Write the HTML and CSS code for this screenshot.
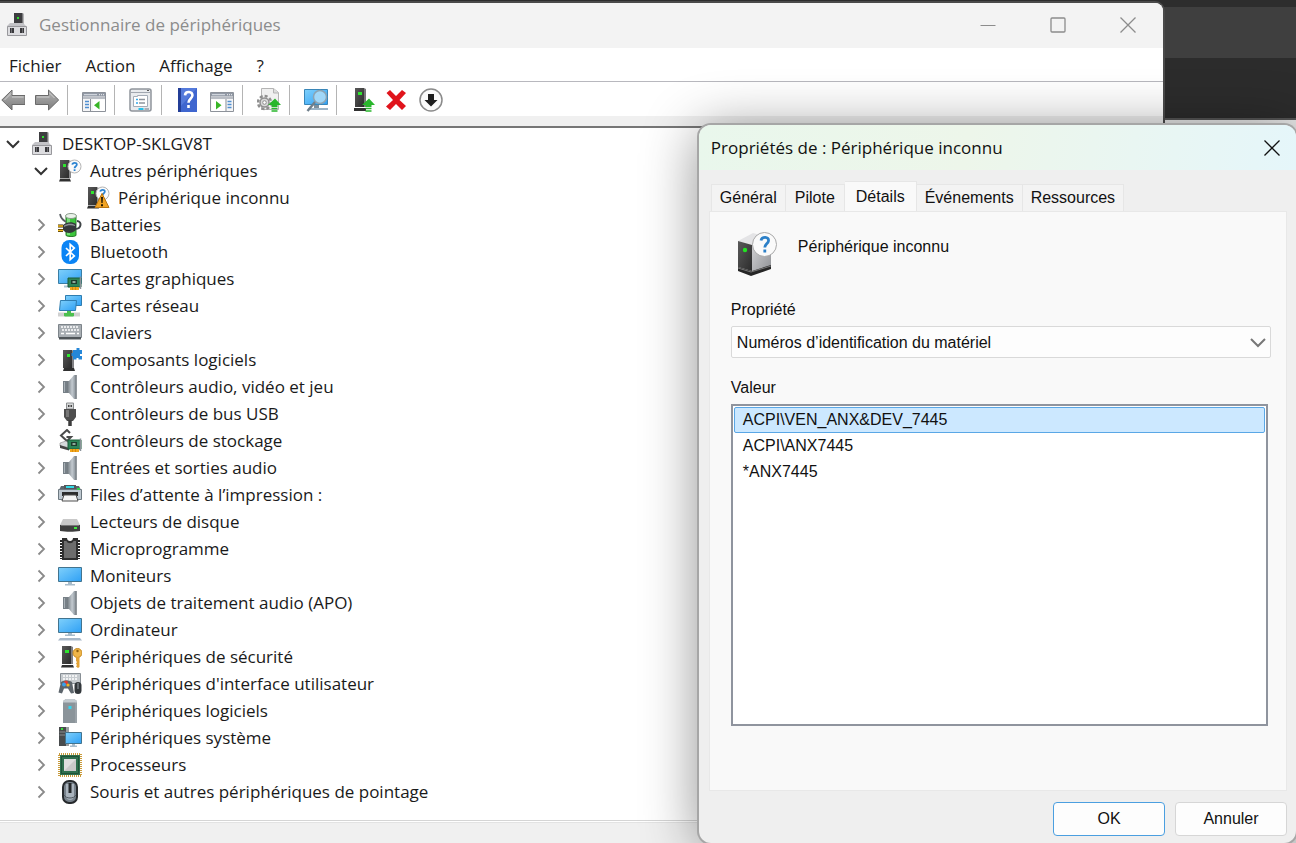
FILE: index.html
```html
<!DOCTYPE html>
<html lang="fr">
<head>
  <meta charset="UTF-8" />
  <title>Gestionnaire de périphériques</title>
  <link rel="stylesheet" href="styles.css">
</head>
<body>
  <!-- icon sprite -->
  <svg class="sprite" aria-hidden="true">
    <defs>
      <linearGradient id="gScreen" x1="0" y1="0" x2="1" y2="1">
        <stop offset="0" stop-color="#7fd0fb" /><stop offset="1" stop-color="#2fa0f5" />
      </linearGradient>
      <linearGradient id="gMetal" x1="0" y1="0" x2="1" y2="0">
        <stop offset="0" stop-color="#6d757b" /><stop offset=".6" stop-color="#c3cad0" /><stop offset="1" stop-color="#8d969d" />
      </linearGradient>
      <linearGradient id="gArrow" x1="0" y1="0" x2="0" y2="1">
        <stop offset="0" stop-color="#b5b5b5" /><stop offset="1" stop-color="#7c7c7c" />
      </linearGradient>
      <linearGradient id="gDark" x1="0" y1="0" x2="1" y2="1">
        <stop offset="0" stop-color="#5a5a5a" /><stop offset="1" stop-color="#2b2b2b" />
      </linearGradient>
      <linearGradient id="gSide" x1="0" y1="0" x2="1" y2="1">
        <stop offset="0" stop-color="#d6d6d8" /><stop offset="1" stop-color="#8f9195" />
      </linearGradient>
    </defs>

    <symbol id="i-computer-hub" viewBox="0 0 24 24">
      <path d="M9 0h8l1 1v11H9z" fill="#3d3d40" />
      <path d="M17 .5h1.500v11H17z" fill="#77777a" />
      <rect x="12" y="4" width="2" height="2" fill="#2ee02e" />
      <path d="M5 10h13l3 3v2H2v-2z" fill="#c3c3c7" />
      <path d="M2.500 13.500h19v9h-19z" fill="#dcdcdf" stroke="#98989c" />
      <rect x="5" y="15" width="4" height="5" fill="#3a3a3d" /><rect x="15" y="15" width="4" height="5" fill="#3a3a3d" />
      <rect x="6" y="15" width="1" height="5" fill="#6c6c70" /><rect x="17" y="15" width="1" height="5" fill="#6c6c70" />
    </symbol>
    <symbol id="i-tower" viewBox="0 0 24 24">
      <path d="M2 1h9v18H2z" fill="url(#gDark)" /><path d="M11 1l2 1v17h-2z" fill="#8b8b8d" />
      <rect x="5" y="5" width="3" height="3" fill="#2fe52f" />
      <path d="M2 20h10l1 2.500H1z" fill="#303030" /><path d="M2 19h10v1H2z" fill="#a9a9a9" />
    </symbol>
    <symbol id="i-unknown" viewBox="0 0 24 24">
      <use href="#i-tower" width="24" height="24" />
      <circle cx="16.500" cy="7.500" r="6.500" fill="#fafafa" stroke="#b4b4b4" />
      <path d="M14.300 5.700c.3-2.600 4.700-2.500 4.500 0c-.1 1.500-2.200 1.600-2.200 3.500M16.600 10.300v1.600" fill="none" stroke="#2c84d2" stroke-width="1.800" />
    </symbol>
    <symbol id="i-unknown-warn" viewBox="0 0 24 24">
      <use href="#i-unknown" width="24" height="24" />
      <path d="M16 7.500L23 21.500H9z" fill="#f0a323" stroke="#b87512" stroke-linejoin="round" />
      <path d="M15 11h2l-.4 6h-1.200zM15 18.200h2v2h-2z" fill="#241800" />
    </symbol>
    <symbol id="i-battery" viewBox="0 0 24 24">
      <path d="M8 3.500h10v19c-2 1.500-8 1.500-10 0z" fill="#3cc63c" stroke="#2b7a2b" />
      <path d="M9 4h3v18H9z" fill="#8fe88f" opacity=".7" />
      <ellipse cx="13" cy="3" rx="5.500" ry="2.500" fill="#eaf3ea" stroke="#8a9a8a" />
      <path d="M2 1c1 5 3 6 6 8" fill="none" stroke="#5b6064" stroke-width="1.800" />
      <path d="M17 16c7 0 7-8 2-8" fill="none" stroke="#3f4447" stroke-width="2" />
      <path d="M5 12c3-3 9-4 13-1v6c-4 4-10 4-13 0z" fill="#34383b" /><path d="M6 12.500c3-2 8-2.500 11-.5v1c-3-1-8-1-11 1z" fill="#8b9195" />
      <path d="M0 13h5M0 17.500h5" stroke="#3b2a00" stroke-width="3" /><path d="M0 13h5M0 17.500h5" stroke="#f5bd22" stroke-width="1.600" />
    </symbol>
    <symbol id="i-bluetooth" viewBox="0 0 24 24">
      <rect x="3.500" y="0" width="17.500" height="24" rx="8" fill="#0a84f5" />
      <path d="M8 8l8.300 8-4.100 3.700V4.300l4.100 3.700L8 16" fill="none" stroke="#fff" stroke-width="1.700" />
    </symbol>
    <symbol id="i-card" viewBox="0 0 24 24">
      <path d="M10 11h13v9H10z" fill="#2d8558" stroke="#1a5c39" />
      <path d="M22.500 9.500V22" stroke="#8b9399" stroke-width="1.500" />
      <rect x="13" y="13" width="6" height="4" fill="#1d3d2d" /><rect x="14.500" y="14" width="3" height="2" fill="#8ea99a" />
      <path d="M12 20h9v3h-9z" fill="#f3a61c" /><path d="M14.500 20v3M17.500 20v3" stroke="#c57b00" stroke-width=".6" />
    </symbol>
    <symbol id="i-display-card" viewBox="0 0 24 24">
      <path d="M.5 2.500h23v14H.5z" fill="url(#gScreen)" stroke="#3a7ea5" />
      <path d="M6 18.500h6v2H6z" fill="#a9c3d2" />
      <use href="#i-card" width="24" height="24" />
    </symbol>
    <symbol id="i-network" viewBox="0 0 24 24">
      <path d="M7.500 1.500h16v10h-16z" fill="url(#gScreen)" stroke="#2f7db0" />
      <path d="M2.500 6.500h16l-1 10h-16z" fill="url(#gScreen)" stroke="#2f7db0" />
      <path d="M0 20.500h22" stroke="#d0d0d0" stroke-width="4" /><path d="M9 17h4v2.500h2.500v3h-9v-3H9z" fill="#4cc04f" /><path d="M6 20.500h10" stroke="#4cc04f" stroke-width="3" />
    </symbol>
    <symbol id="i-keyboard" viewBox="0 0 24 24">
      <path d="M.5 3.500h23v13H.5z" fill="#a9afb4" stroke="#7d848a" />
      <path d="M1 16h22v2.500H1z" fill="#4f5559" />
      <path d="M3 6h18M4 9h17" stroke="#fff" stroke-width="1.500" stroke-dasharray="2 1" /><path d="M3 12.500h3M8 12.500h9M19 12.500h2" stroke="#fff" stroke-width="1.500" />
    </symbol>
    <symbol id="i-software-component" viewBox="0 0 24 24">
      <path d="M5 2h9v18H5z" fill="url(#gDark)" /><path d="M14 2l2 1v17h-2z" fill="#808083" />
      <rect x="9" y="6" width="3" height="3" fill="#2fe52f" />
      <path d="M6 20h10l1 3H5z" fill="#303030" />
      <path d="M15 2h3.500V0h3v2H24v4h-2v2h2v3.500h-3.500V10h-2v1.500H15V8h-1.500V5H15z" fill="#2587d9" />
    </symbol>
    <symbol id="i-speaker" viewBox="0 0 24 24">
      <path d="M5 6h6v12H5z" fill="#778087" /><path d="M6.500 7v10" stroke="#a9b1b7" />
      <path d="M9 7l2-1 5-6h1.500v24H16l-5-6-2-1z" fill="url(#gMetal)" />
      <path d="M18 0v24" stroke="#6d757b" stroke-width="1.500" />
    </symbol>
    <symbol id="i-usb" viewBox="0 0 24 24">
      <path d="M8.500 1h7v6h-7z" fill="#d6d8d9" stroke="#8c8f91" /><path d="M10 3h1.500v2H10zM12.500 3H14v2h-1.500z" fill="#444" />
      <path d="M6 7h12v8l-3 4H9l-3-4z" fill="#4e4e4e" /><path d="M8 8h3v7H8z" fill="#777" />
      <path d="M12 18v6" stroke="#3c3c3c" stroke-width="3.500" />
    </symbol>
    <symbol id="i-storage" viewBox="0 0 24 24">
      <path d="M12 4L9 1 3 6.500l6 5.500 4-4H8.500" fill="none" stroke="#4a4a4a" stroke-width="2" />
      <path d="M2 14l6-2 5 4v3L2 17z" fill="#d5d9db" stroke="#888" stroke-width=".6" /><path d="M2 16l9 3v2.500L2 19z" fill="#444" />
      <use href="#i-card" width="24" height="24" />
    </symbol>
    <symbol id="i-printer" viewBox="0 0 24 24">
      <path d="M3 3h18l2 4H1z" fill="#5d666d" /><path d="M6 2h12v4H6z" fill="#53575a" /><path d="M8 3h8v2H8z" fill="#32d9e6" />
      <path d="M.5 6.500h23v10H.5z" fill="#bec8d0" stroke="#6d7880" /><rect x="19" y="5" width="3" height="2" fill="#32d24a" />
      <path d="M4 9h16v4H4z" fill="#2c2c2c" /><path d="M6 12h12l2 6H4z" fill="#f5f5f5" stroke="#4f4f4f" />
    </symbol>
    <symbol id="i-disk" viewBox="0 0 24 24">
      <path d="M5 9h14l3 6H2z" fill="#c9c9c9" /><path d="M2 15h20v6c-6 1-14 1-20 0z" fill="#3f3f3f" /><path d="M3 15.500h18" stroke="#777" />
      <rect x="16" y="17" width="3" height="2" fill="#3ee63e" />
    </symbol>
    <symbol id="i-firmware" viewBox="0 0 24 24">
      <path d="M3 3v19M21 3v19" stroke="#282828" stroke-width="2" stroke-dasharray="2 1" />
      <path d="M4 1h5c0 4 6 4 6 0h5v22H4z" fill="#303030" /><path d="M6 4h2.500c1 3 6 3 7 0H18v17H6z" fill="#6d6d6d" />
    </symbol>
    <symbol id="i-monitor" viewBox="0 0 24 24">
      <path d="M.5 3.500h23v14H.5z" fill="url(#gScreen)" stroke="#42748f" />
      <path d="M10 18h4v2h3v1.500H7V20h3z" fill="#a8bccb" />
    </symbol>
    <symbol id="i-pc" viewBox="0 0 24 24">
      <path d="M.5.500h23v14H.5z" fill="url(#gScreen)" stroke="#42748f" />
      <path d="M10 15h4v1.500h3V18H7v-1.500h3z" fill="#a8bccb" /><path d="M2 20h20l2 2.500H0z" fill="#a9b9c9" />
    </symbol>
    <symbol id="i-security" viewBox="0 0 24 24">
      <path d="M4 1h9v18H4z" fill="url(#gDark)" /><path d="M13 1l2 1v17h-2z" fill="#808083" />
      <rect x="7" y="5" width="4" height="3" fill="#2fe52f" /><path d="M4 20h11l1 2.500H3z" fill="#303030" />
      <circle cx="19.500" cy="8" r="4.500" fill="#efb548" stroke="#c68a20" /><circle cx="19.500" cy="6" r="1.200" fill="#8a5c0c" />
      <path d="M18 12h3.500v10l-1.500 1-2-1.500 1-1.500-1-1.500 1-1.500-1-1z" fill="#e3a234" />
    </symbol>
    <symbol id="i-hid" viewBox="0 0 24 24">
      <path d="M2.500 1.500h20v10h-20z" fill="#c6cbcf" stroke="#878e94" />
      <path d="M5 4h15M5 7h15" stroke="#fff" stroke-width="1.500" stroke-dasharray="2 1" />
      <path d="M3 10c3-2 8-2 11 0l2 11-3 .5-3-5H6L4 21.500l-3.500-1z" fill="#5d656c" />
      <circle cx="8" cy="10.500" r="2" fill="#e03a2f" /><circle cx="10" cy="13" r="1.600" fill="#f0b323" /><circle cx="6" cy="12.500" r="2" fill="#3aa0ea" />
      <rect x="16.500" y="10" width="7" height="12" rx="3.500" fill="#32373b" /><path d="M20 11v6" stroke="#9aa4ab" />
    </symbol>
    <symbol id="i-software-device" viewBox="0 0 24 24">
      <path d="M5 2l3-2h8l3 2v22H5z" fill="#9aa2a8" /><path d="M5 3h12v21H5z" fill="#8b949a" /><path d="M5 2l3-2h8l3 2v1.500H5z" fill="#c3cacf" />
      <rect x="10.500" y="7" width="3" height="3" fill="#35d5ee" />
    </symbol>
    <symbol id="i-system" viewBox="0 0 24 24">
      <path d="M1 1h7v19H1z" fill="#484b4d" /><path d="M8 1h3v19H8z" fill="#9b9fa2" /><rect x="3" y="2" width="2" height="2" fill="#38e038" />
      <path d="M1.500 6h6M1.500 9h6" stroke="#8a8d90" />
      <path d="M7.500 6.500h16v11h-16z" fill="url(#gScreen)" stroke="#42748f" /><path d="M14 18h3v1.500h2V21h-7v-1.500h2z" fill="#a8bccb" />
    </symbol>
    <symbol id="i-cpu" viewBox="0 0 24 24">
      <rect x="1" y="1" width="22" height="22" fill="none" stroke="#c99b3b" stroke-width="2" stroke-dasharray="1 1" />
      <path d="M2 2h20v20H2z" fill="#2f6f4e" /><path d="M3.500 3.500h17v17h-17z" fill="none" stroke="#1f5338" />
      <path d="M6 6h12v12H6z" fill="#dedede" /><path d="M18 6v12H6z" fill="#c9c9c9" />
    </symbol>
    <symbol id="i-mouse" viewBox="0 0 24 24">
      <rect x="5" y="1" width="14" height="22" rx="6" fill="#76808a" stroke="#26292c" stroke-width="2" />
      <path d="M8 4v13c1 4 7 4 8 0V4z" fill="#a9b3bd" /><path d="M6 15c2 4 10 4 12 0" fill="none" stroke="#4d555d" />
      <path d="M12 3v10" stroke="#25282b" stroke-width="3" />
    </symbol>

    <symbol id="t-back" viewBox="0 0 24 24">
      <path d="M.8 12L11 2v5.500h13v9H11V22z" fill="url(#gArrow)" stroke="#6a6a6a" stroke-linejoin="round" />
      <path d="M3.500 12L10 5.500M11 9h11.500" fill="none" stroke="#d0d0d0" />
    </symbol>
    <symbol id="t-forward" viewBox="0 0 24 24">
      <path d="M23.700 12L13.500 2v5.500h-13v9h13V22z" fill="url(#gArrow)" stroke="#6a6a6a" stroke-linejoin="round" />
      <path d="M14.500 5l5 5M2 9h12.500" fill="none" stroke="#d0d0d0" />
    </symbol>
    <symbol id="t-window" viewBox="0 0 24 24">
      <path d="M.5 4.500h23v19H.5z" fill="#f5f5f6" stroke="#8d929a" />
      <path d="M1 5h22v3.500H1z" fill="#9299a5" /><path d="M2 6.700h13" stroke="#dfe3e9" /><path d="M17 6.700h5" stroke="#f4f4f4" stroke-dasharray="1 1" />
      <path d="M1 10h22" stroke="#b9bdc4" stroke-width="2" />
    </symbol>
    <symbol id="t-tree" viewBox="0 0 24 24">
      <use href="#t-window" width="24" height="24" />
      <path d="M8.500 11v12" stroke="#8d929a" /><path d="M3 13.500h4M3 16.500h4M3 19.500h4" stroke="#4f8fd1" stroke-width="1.500" />
      <path d="M11 11.500h12v11.500h-12z" fill="#fff" /><path d="M17.500 13v8.500L12 17.200z" fill="#38b526" />
    </symbol>
    <symbol id="t-action" viewBox="0 0 24 24">
      <use href="#t-window" width="24" height="24" />
      <path d="M16 11v12" stroke="#8d929a" /><path d="M17.500 13.500h4M17.500 16.500h4M17.500 19.500h4" stroke="#4f8fd1" stroke-width="1.500" />
      <path d="M1.500 11.500H15v11.500H1.500z" fill="#fff" /><path d="M6 13v8.500l5.500-4.300z" fill="#38b526" />
    </symbol>
    <symbol id="t-properties" viewBox="0 0 24 24">
      <rect x="1" y="1" width="21" height="22" rx="2" fill="#e9ebee" stroke="#90959c" stroke-width="1.500" />
      <path d="M2 4.500h19" stroke="#a1a7b0" /><path d="M18 2.500h2" stroke="#555" />
      <path d="M4.500 8.500h4v-1h10v11h-14z" fill="#fff" stroke="#a4acb7" />
      <path d="M7 11.500h2M7 15h2" stroke="#35a7e8" stroke-width="1.500" /><path d="M10 11.500h6M10 15h6" stroke="#8f959d" stroke-width="1.500" />
      <path d="M9.500 21h5" stroke="#24bfe8" stroke-width="2" /><path d="M15.500 21h4.500" stroke="#a9afb7" stroke-width="2" />
    </symbol>
    <symbol id="t-help" viewBox="0 0 24 24">
      <path d="M2 0h19v24H2z" fill="#3f66cf" /><path d="M2 0h3v24H2z" fill="#233e97" /><path d="M5 0h16L5 18z" fill="#6387e2" opacity=".6" />
      <path d="M9 7.300c.4-4.600 8-4.200 7.400.4-.4 3-3.900 3.300-3.900 7M12.500 17v3" fill="none" stroke="#fff" stroke-width="2.600" />
    </symbol>
    <symbol id="t-uparrow" viewBox="0 0 24 24">
      <path d="M18 10.500L24 17h-3.500v2h-6v-2H11z" fill="#29b62c" /><path d="M14.500 20.500h6M14.500 23h6" stroke="#29b62c" stroke-width="1.600" />
    </symbol>
    <symbol id="t-update" viewBox="0 0 24 24">
      <path d="M4.500.5h12l5 4v17h-17z" fill="#f0f0f0" stroke="#b4b4b4" /><path d="M16.500.5v4.500h5" fill="#ddd" stroke="#b4b4b4" />
      <circle cx="7.500" cy="14.500" r="6.500" fill="none" stroke="#8f8f8f" stroke-width="2.500" stroke-dasharray="3 2" />
      <circle cx="7.500" cy="14.500" r="4.500" fill="#d9d9d9" stroke="#8f8f8f" stroke-width="1.500" /><circle cx="7.500" cy="14.500" r="1.800" fill="#fff" stroke="#8f8f8f" />
      <use href="#t-uparrow" width="24" height="24" />
    </symbol>
    <symbol id="t-scan" viewBox="0 0 24 24">
      <path d="M.5 1.500h23v15H.5z" fill="url(#gScreen)" stroke="#3986b8" /><path d="M4 21h20" stroke="#9cb4c6" stroke-width="2" /><path d="M10 17h5v3h-5z" fill="#7d8f9c" />
      <path d="M11.500 13.500L3.500 23" stroke="#6f7f8b" stroke-width="2.500" />
      <circle cx="16" cy="9" r="6.500" fill="#a9daf7" fill-opacity=".9" stroke="#8ba4b4" stroke-width="1.500" />
    </symbol>
    <symbol id="t-driver" viewBox="0 0 24 24">
      <path d="M4 0h9v19H4z" fill="url(#gDark)" /><path d="M13 0l2 1v18h-2z" fill="#77777a" /><rect x="7" y="4" width="4" height="3" fill="#2fe52f" />
      <path d="M3 20h12v3H3z" fill="#303030" /><use href="#t-uparrow" width="24" height="24" />
    </symbol>
    <symbol id="t-remove" viewBox="0 0 24 24">
      <path d="M1.500 5L5 2l6 6 6-6 4 3-6.500 7 6.500 6-4 4-6-6-6 6-4-3.500L8 12z" fill="#e0141c" />
    </symbol>
    <symbol id="t-disable" viewBox="0 0 24 24">
      <circle cx="12" cy="12" r="11" fill="#fafafa" stroke="#8a8a8a" stroke-width="1.500" />
      <path d="M9 6h6v6h3.500L12 18.500 5.500 12H9z" fill="#1d1d1d" />
    </symbol>

    <symbol id="c-down" viewBox="0 0 14 14"><path d="M1 4l6 6 6-6" fill="none" stroke="currentColor" stroke-width="2" /></symbol>
    <symbol id="c-right" viewBox="0 0 14 14"><path d="M4.500 1.500L10 7l-5.500 5.500" fill="none" stroke="currentColor" stroke-width="1.800" /></symbol>
    <symbol id="w-close" viewBox="0 0 16 16"><path d="M.5.5l15 15M15.500.5l-15 15" fill="none" stroke="currentColor" stroke-width="1.300" /></symbol>
  </svg>

  <main class="window manager">
    <header class="titlebar">
      <svg class="icon"><use href="#i-computer-hub" /></svg>
      <h1>Gestionnaire de périphériques</h1>
      <div class="window-controls">
        <button type="button" aria-label="Réduire"><svg viewBox="0 0 16 16"><path d="M.5 8.500h15" stroke="currentColor" /></svg></button>
        <button type="button" aria-label="Agrandir"><svg viewBox="0 0 16 16"><rect x="1" y="1" width="14" height="14" rx="1" fill="none" stroke="currentColor" stroke-width="1.300" /></svg></button>
        <button type="button" aria-label="Fermer"><svg><use href="#w-close" /></svg></button>
      </div>
    </header>

    <nav class="menubar">
      <button type="button">Fichier</button>
      <button type="button">Action</button>
      <button type="button">Affichage</button>
      <button type="button">?</button>
    </nav>

    <div class="toolbar" role="toolbar">
      <button type="button" aria-label="Précédent"><svg class="icon"><use href="#t-back" /></svg></button>
      <button type="button" aria-label="Suivant"><svg class="icon"><use href="#t-forward" /></svg></button>
      <span class="separator"></span>
      <button type="button" aria-label="Arborescence"><svg class="icon"><use href="#t-tree" /></svg></button>
      <span class="separator"></span>
      <button type="button" aria-label="Propriétés"><svg class="icon"><use href="#t-properties" /></svg></button>
      <span class="separator"></span>
      <button type="button" aria-label="Aide"><svg class="icon"><use href="#t-help" /></svg></button>
      <button type="button" aria-label="Volet Actions"><svg class="icon"><use href="#t-action" /></svg></button>
      <span class="separator"></span>
      <button type="button" aria-label="Mettre à jour"><svg class="icon"><use href="#t-update" /></svg></button>
      <span class="separator"></span>
      <button type="button" aria-label="Analyser"><svg class="icon"><use href="#t-scan" /></svg></button>
      <span class="separator"></span>
      <button type="button" aria-label="Ajouter des pilotes"><svg class="icon"><use href="#t-driver" /></svg></button>
      <button type="button" aria-label="Désinstaller"><svg class="icon"><use href="#t-remove" /></svg></button>
      <button type="button" aria-label="Désactiver"><svg class="icon"><use href="#t-disable" /></svg></button>
    </div>

    <div class="tree">
      <ul>
        <li>
          <div class="node open"><button type="button" aria-label="Réduire"><svg><use href="#c-down" /></svg></button><svg class="icon"><use href="#i-computer-hub" /></svg><span>DESKTOP-SKLGV8T</span></div>
          <ul>
            <li>
              <div class="node open"><button type="button" aria-label="Réduire"><svg><use href="#c-down" /></svg></button><svg class="icon"><use href="#i-unknown" /></svg><span>Autres périphériques</span></div>
              <ul>
                <li><div class="node leaf"><svg class="icon"><use href="#i-unknown-warn" /></svg><span>Périphérique inconnu</span></div></li>
              </ul>
            </li>
            <li><div class="node"><button type="button" aria-label="Développer"><svg><use href="#c-right" /></svg></button><svg class="icon"><use href="#i-battery" /></svg><span>Batteries</span></div></li>
            <li><div class="node"><button type="button" aria-label="Développer"><svg><use href="#c-right" /></svg></button><svg class="icon"><use href="#i-bluetooth" /></svg><span>Bluetooth</span></div></li>
            <li><div class="node"><button type="button" aria-label="Développer"><svg><use href="#c-right" /></svg></button><svg class="icon"><use href="#i-display-card" /></svg><span>Cartes graphiques</span></div></li>
            <li><div class="node"><button type="button" aria-label="Développer"><svg><use href="#c-right" /></svg></button><svg class="icon"><use href="#i-network" /></svg><span>Cartes réseau</span></div></li>
            <li><div class="node"><button type="button" aria-label="Développer"><svg><use href="#c-right" /></svg></button><svg class="icon"><use href="#i-keyboard" /></svg><span>Claviers</span></div></li>
            <li><div class="node"><button type="button" aria-label="Développer"><svg><use href="#c-right" /></svg></button><svg class="icon"><use href="#i-software-component" /></svg><span>Composants logiciels</span></div></li>
            <li><div class="node"><button type="button" aria-label="Développer"><svg><use href="#c-right" /></svg></button><svg class="icon"><use href="#i-speaker" /></svg><span>Contrôleurs audio, vidéo et jeu</span></div></li>
            <li><div class="node"><button type="button" aria-label="Développer"><svg><use href="#c-right" /></svg></button><svg class="icon"><use href="#i-usb" /></svg><span>Contrôleurs de bus USB</span></div></li>
            <li><div class="node"><button type="button" aria-label="Développer"><svg><use href="#c-right" /></svg></button><svg class="icon"><use href="#i-storage" /></svg><span>Contrôleurs de stockage</span></div></li>
            <li><div class="node"><button type="button" aria-label="Développer"><svg><use href="#c-right" /></svg></button><svg class="icon"><use href="#i-speaker" /></svg><span>Entrées et sorties audio</span></div></li>
            <li><div class="node"><button type="button" aria-label="Développer"><svg><use href="#c-right" /></svg></button><svg class="icon"><use href="#i-printer" /></svg><span>Files d’attente à l’impression :</span></div></li>
            <li><div class="node"><button type="button" aria-label="Développer"><svg><use href="#c-right" /></svg></button><svg class="icon"><use href="#i-disk" /></svg><span>Lecteurs de disque</span></div></li>
            <li><div class="node"><button type="button" aria-label="Développer"><svg><use href="#c-right" /></svg></button><svg class="icon"><use href="#i-firmware" /></svg><span>Microprogramme</span></div></li>
            <li><div class="node"><button type="button" aria-label="Développer"><svg><use href="#c-right" /></svg></button><svg class="icon"><use href="#i-monitor" /></svg><span>Moniteurs</span></div></li>
            <li><div class="node"><button type="button" aria-label="Développer"><svg><use href="#c-right" /></svg></button><svg class="icon"><use href="#i-speaker" /></svg><span>Objets de traitement audio (APO)</span></div></li>
            <li><div class="node"><button type="button" aria-label="Développer"><svg><use href="#c-right" /></svg></button><svg class="icon"><use href="#i-pc" /></svg><span>Ordinateur</span></div></li>
            <li><div class="node"><button type="button" aria-label="Développer"><svg><use href="#c-right" /></svg></button><svg class="icon"><use href="#i-security" /></svg><span>Périphériques de sécurité</span></div></li>
            <li><div class="node"><button type="button" aria-label="Développer"><svg><use href="#c-right" /></svg></button><svg class="icon"><use href="#i-hid" /></svg><span>Périphériques d'interface utilisateur</span></div></li>
            <li><div class="node"><button type="button" aria-label="Développer"><svg><use href="#c-right" /></svg></button><svg class="icon"><use href="#i-software-device" /></svg><span>Périphériques logiciels</span></div></li>
            <li><div class="node"><button type="button" aria-label="Développer"><svg><use href="#c-right" /></svg></button><svg class="icon"><use href="#i-system" /></svg><span>Périphériques système</span></div></li>
            <li><div class="node"><button type="button" aria-label="Développer"><svg><use href="#c-right" /></svg></button><svg class="icon"><use href="#i-cpu" /></svg><span>Processeurs</span></div></li>
            <li><div class="node"><button type="button" aria-label="Développer"><svg><use href="#c-right" /></svg></button><svg class="icon"><use href="#i-mouse" /></svg><span>Souris et autres périphériques de pointage</span></div></li>
          </ul>
        </li>
      </ul>
    </div>
    <footer class="statusbar"></footer>
  </main>

  <form class="window dialog" role="dialog" aria-labelledby="dialogTitle">
    <header class="dialog-title">
      <h2 id="dialogTitle">Propriétés de : Périphérique inconnu</h2>
      <button type="button" aria-label="Fermer"><svg><use href="#w-close" /></svg></button>
    </header>

    <div class="tabs" role="tablist">
      <button type="button" role="tab">Général</button>
      <button type="button" role="tab">Pilote</button>
      <button type="button" role="tab" class="active" aria-selected="true">Détails</button>
      <button type="button" role="tab">Événements</button>
      <button type="button" role="tab">Ressources</button>
    </div>

    <section class="panel" role="tabpanel">
      <div class="device">
        <svg viewBox="0 0 40 44">
          <path d="M1 9l15-8 18 5-18 8z" fill="#e4e4e6" />
          <path d="M1 9l14 4v26L1 35z" fill="url(#gDark)" />
          <path d="M15 13l19-7v29l-19 6z" fill="url(#gSide)" />
          <path d="M1 35l14 4 19-6v4l-20 7-13-5z" fill="#262626" /><path d="M1 36l13 4 20-6" fill="none" stroke="#9a9a9a" stroke-width=".7" />
          <circle cx="8" cy="18" r="2.200" fill="#22e422" />
          <circle cx="27.500" cy="12.500" r="12" fill="#fafafa" stroke="#a9a9a9" />
          <path d="M24 8.500c1-4.500 8-4 7.500.3c-.4 3-3.700 3.200-3.700 6.700M27.800 17.500v3" fill="none" stroke="#2c80c8" stroke-width="2.800" />
        </svg>
        <span>Périphérique inconnu</span>
      </div>

      <label for="property">Propriété</label>
      <div class="combo">
        <select id="property">
          <option>Numéros d’identification du matériel</option>
        </select>
        <svg viewBox="0 0 16 10"><path d="M1 1l7 7 7-7" fill="none" stroke="#777" stroke-width="2" /></svg>
      </div>

      <label for="values">Valeur</label>
      <select id="values" class="values" size="12">
        <option selected>ACPI\VEN_ANX&amp;DEV_7445</option>
        <option>ACPI\ANX7445</option>
        <option>*ANX7445</option>
      </select>
    </section>

    <footer class="actions">
      <button type="submit" class="primary">OK</button>
      <button type="button">Annuler</button>
    </footer>
  </form>
</body>
</html>
```
FILE: styles.css
```css
* {
  box-sizing: border-box;
}
body {
  margin: 0;
  height: 100vh;
  overflow: hidden;
  font-family: "Open Sans", "Noto Sans", sans-serif;
  font-size: 17px;
  color: #1a1a1a;
  background: linear-gradient(#2d2d2d 7px, #3f3f3f 7px, #3f3f3f 58px, #2c2c2c 58px, #2c2c2c 118px, #555 118px, #555 120px, #e8e8e8 120px);
}
button {
  margin: 0;
  padding: 0;
  border: 0;
  background: none;
  font: inherit;
  color: inherit;
}
h1, h2 {
  margin: 0;
  font-size: 17px;
  font-weight: 400;
}
.sprite {
  position: absolute;
  width: 0;
  height: 0;
}
.icon {
  display: block;
  flex: none;
  width: 24px;
  height: 24px;
}
.window {
  position: absolute;
  display: flex;
  flex-direction: column;
}

/* device manager */
.manager {
  top: 3px;
  left: 0;
  right: 133px;
  bottom: 0;
  background: #fff;
  border-radius: 0 8px 0 0;
  box-shadow: 0 0 0 2px #4a4a4a;
}
.titlebar {
  display: flex;
  align-items: center;
  height: 45px;
  padding: 0 0 2px 5px;
  background: #f3f3f3;
  border-radius: 0 8px 0 0;
  color: #8c8c8c;
}
.titlebar h1 {
  margin-left: 10px;
}
.window-controls {
  display: flex;
  margin-left: auto;
}
.window-controls button {
  display: grid;
  place-items: center;
  width: 70px;
  height: 43px;
}
.window-controls svg,
.dialog-title svg {
  width: 16px;
  height: 16px;
}
.menubar {
  display: flex;
  gap: 24px;
  height: 34px;
  padding: 1px 9px 0;
  border-bottom: 1px solid #b8b8be;
}
.toolbar {
  display: flex;
  align-items: center;
  height: 34px;
  padding: 2px 0 0 1px;
}
.toolbar button + button {
  margin-left: 10px;
}
.separator {
  width: 1px;
  height: 30px;
  margin: 0 14px 0 8px;
  background: #b4b4b4;
}
.tree {
  flex: 1;
  min-height: 0;
  overflow: hidden;
  border-bottom: 1px solid #d5d5d5;
}
.tree::before {
  content: "";
  display: block;
  height: 10px;
  background: #f0f0f0;
  border-bottom: 2px solid #767676;
}
.tree ul {
  margin: 0;
  padding: 0;
  list-style: none;
}
.tree ul ul {
  padding-left: 28px;
}
.tree > ul {
  padding-top: 2px;
}
.node {
  display: flex;
  align-items: center;
  height: 27px;
}
.node button {
  display: grid;
  place-items: center;
  width: 26px;
  color: #8a8a8a;
}
.node.open button {
  color: #333;
}
.node button svg {
  width: 14px;
  height: 14px;
}
.node .icon {
  margin: 0 8px 0 4px;
}
.node.leaf {
  padding-left: 26px;
}
.statusbar {
  height: 21px;
  margin-top: 1px;
  background: #f0f0f0;
  border-top: 1px solid #e3e3e3;
}

/* properties dialog */
.dialog {
  top: 125px;
  left: calc(54% - 1px);
  right: 0;
  bottom: 0;
  padding: 0 9px 7px 10px;
  background: #efefef;
  border-radius: 12px;
  box-shadow: 0 0 0 2px #a6a6a6, 0 6px 56px rgba(0, 0, 0, 0.45);
  font-family: "Liberation Sans", Arial, sans-serif;
  font-size: 16px;
  color: #111;
}
.dialog-title {
  display: flex;
  align-items: center;
  justify-content: space-between;
  height: 45px;
  margin: 0 -9px 0 -10px;
  padding: 0 16px 0 12px;
  border-radius: 12px 12px 0 0;
  background: linear-gradient(100deg, #e9f7ec, #edf6ea 45%, #e5f6fa);
  font-family: "Open Sans", "Noto Sans", sans-serif;
}
.dialog-title button {
  display: grid;
}
.tabs {
  display: flex;
  align-items: flex-end;
  height: 41px;
  padding-left: 2px;
}
.tabs button {
  height: 27px;
  padding: 0 9px;
  background: #f3f3f3;
  border: 1px solid #e6e6e6;
  border-width: 1px 1px 0 0;
}
.tabs button:first-child {
  padding: 0 8px;
  border-left-width: 1px;
}
.tabs .active {
  height: 31px;
  margin-bottom: -1px;
  padding: 0 11px;
  background: #f9f9f9;
}
.tabs .active ~ button {
  padding: 0 8px;
}
.panel {
  flex: 1;
  min-height: 0;
  display: flex;
  flex-direction: column;
  padding: 20px 18px 64px 21px;
  background: #f9f9f9;
  border: 1px solid #e8e8e8;
}
.device {
  display: flex;
  gap: 21px;
  margin: 0 0 24px 6px;
}
.device svg {
  width: 40px;
  height: 44px;
}
.device span {
  padding-top: 6px;
}
.panel label {
  line-height: 20px;
  margin-bottom: 6px;
}
.combo {
  position: relative;
  display: grid;
  margin: 0 -3px 20px 0;
}
.combo select {
  appearance: none;
  height: 32px;
  padding: 0 32px 0 5px;
  border: 1px solid #d9d9d9;
  border-radius: 2px;
  background: #fdfdfd;
  font: inherit;
  color: inherit;
}
.combo svg {
  position: absolute;
  top: 12px;
  right: 5px;
  width: 16px;
  height: 10px;
  pointer-events: none;
}
.values {
  flex: 1;
  min-height: 0;
  padding: 1px;
  overflow: hidden;
  border: 2px solid #8f949e;
  border-radius: 0;
  background: #fff;
  font: inherit;
  color: inherit;
  outline: 0;
}
.values option {
  height: 26px;
  padding: 3px 8px 0;
  border: 1px solid transparent;
  border-radius: 2px;
}
.values option:checked {
  border-color: #5aa7e6;
  background: #cce8ff linear-gradient(#cce8ff, #cce8ff);
  color: #111;
}
.actions {
  display: flex;
  justify-content: flex-end;
  gap: 10px;
  padding-top: 11px;
}
.actions button {
  width: 112px;
  height: 34px;
  border: 1px solid #d6d6d6;
  border-radius: 4px;
  background: #fdfdfd;
}
.actions .primary {
  border-color: #4b9fe0;
}
```
